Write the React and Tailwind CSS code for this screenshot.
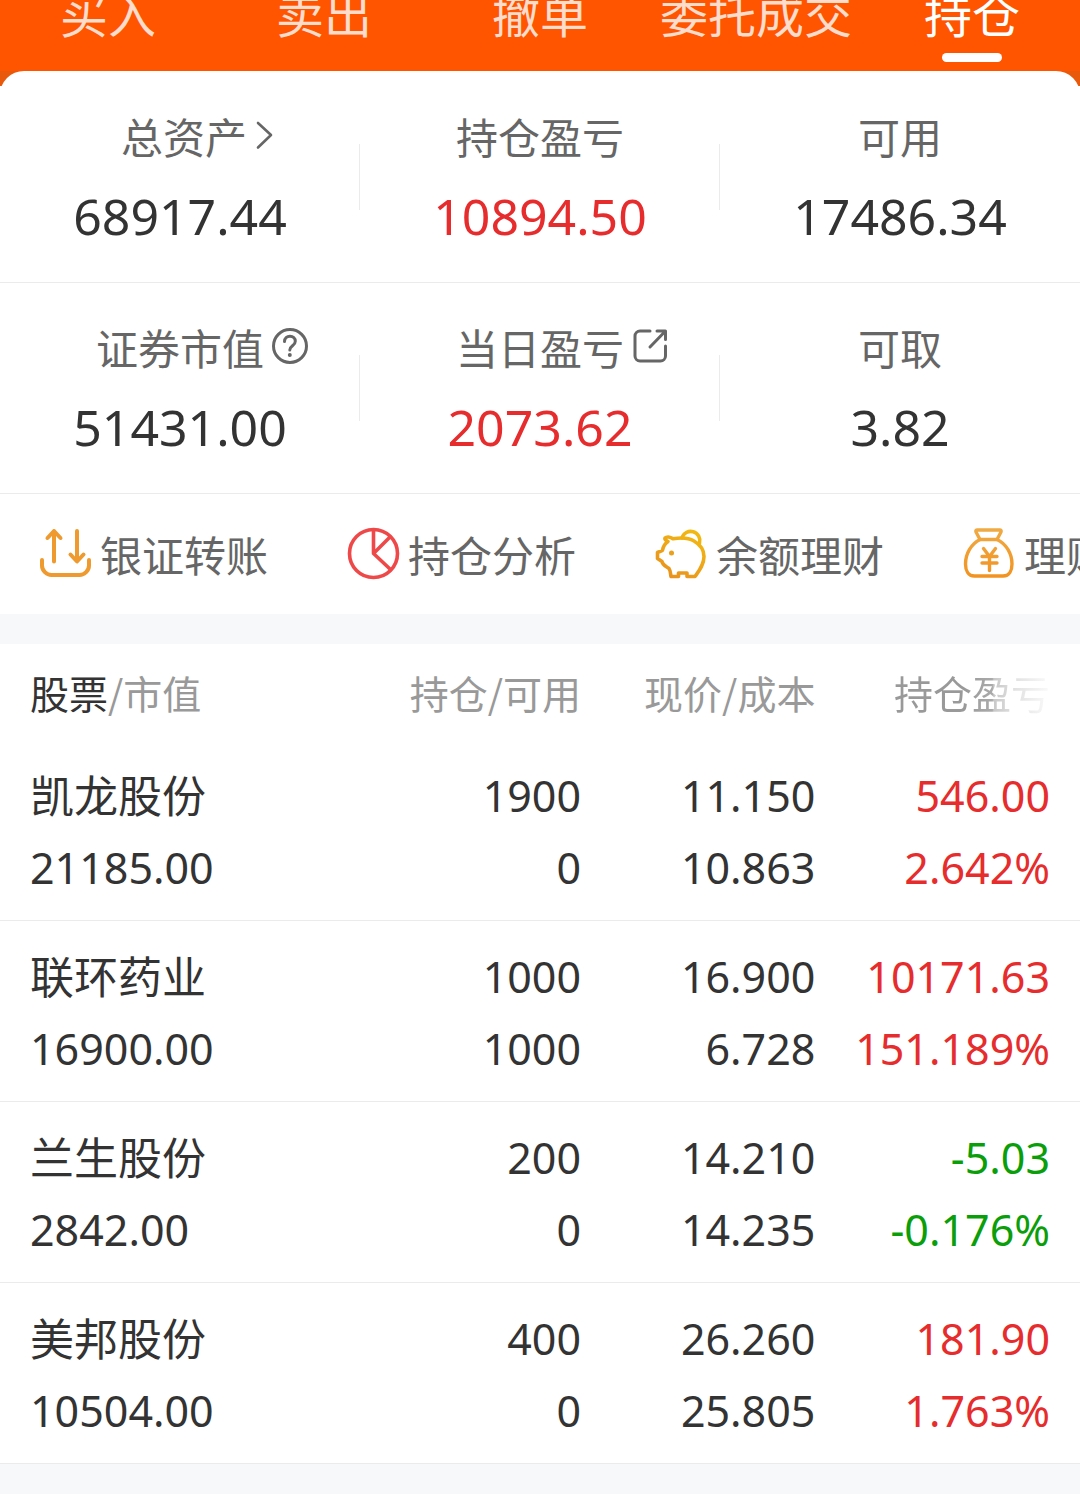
import React from "react";

const tabs = ["买入", "卖出", "撤单", "委托成交", "持仓"];

const holdings = [
  { name: "凯龙股份", value: "21185.00", held: "1900", usable: "0", price: "11.150", cost: "10.863", profit: "546.00", rate: "2.642%" },
  { name: "联环药业", value: "16900.00", held: "1000", usable: "1000", price: "16.900", cost: "6.728", profit: "10171.63", rate: "151.189%" },
  { name: "兰生股份", value: "2842.00", held: "200", usable: "0", price: "14.210", cost: "14.235", profit: "-5.03", rate: "-0.176%" },
  { name: "美邦股份", value: "10504.00", held: "400", usable: "0", price: "26.260", cost: "25.805", profit: "181.90", rate: "1.763%" },
];

function ChevronIcon() {
  return (
    <svg width="18" height="30" viewBox="0 0 18 30" fill="none" stroke="#666" strokeWidth="2.6" strokeLinecap="round" strokeLinejoin="round">
      <path d="M3 3l13 12L3 27.500" />
    </svg>
  );
}

function HelpIcon() {
  return (
    <svg width="36" height="36" viewBox="0 0 36 36" fill="none" stroke="#666" strokeWidth="3" strokeLinecap="round">
      <circle cx="18" cy="18" r="16.500" />
      <path d="M12.500 13.500c0-3.300 2.500-5.300 5.500-5.300s5.300 2 5.300 5c0 2-1.100 3.300-2.800 4.600-1.800 1.400-2.700 2.300-2.700 4.200" />
      <circle cx="17.800" cy="27" r="2" fill="#666" stroke="none" />
    </svg>
  );
}

function ShareIcon() {
  return (
    <svg width="36" height="34" viewBox="0 0 36 34" fill="none" stroke="#666" strokeWidth="3" strokeLinecap="round" strokeLinejoin="round">
      <path d="M18 2H8a5 5 0 0 0-5 5v20a5 5 0 0 0 5 5h20.500a5 5 0 0 0 5-5V17" />
      <path d="M25 2h8.500v8.500M33 2.500L18 18" />
    </svg>
  );
}

function TransferIcon() {
  return (
    <svg width="54" height="54" viewBox="0 0 54 54" fill="none" stroke="#ee9a2e" strokeWidth="4" strokeLinecap="round" strokeLinejoin="round">
      <path d="M16 34.500V4M9.500 11l6.500-7 6.500 7" />
      <path d="M39 4v30M32.500 27.500l6.500 7 6.500-7" />
      <path d="M4 33v5.500c0 5 4.500 9.500 9.500 9.500h28c5 0 9.500-4.500 9.500-9.500V33" />
    </svg>
  );
}

function PieIcon() {
  return (
    <svg width="54" height="54" viewBox="0 0 54 54" fill="none" stroke="#ee4848" strokeWidth="3.600" strokeLinejoin="round">
      <circle cx="27.500" cy="26.500" r="24" />
      <path d="M27.500 2.500v24L44 42M27.500 26.500L44 10" />
    </svg>
  );
}

function PiggyIcon() {
  return (
    <svg width="54" height="54" viewBox="0 0 54 54" fill="none" stroke="url(#piggy)" strokeWidth="3.600" strokeLinejoin="round" strokeLinecap="round">
      <defs>
        <linearGradient id="piggy" gradientUnits="userSpaceOnUse" x1="44" y1="0" x2="12" y2="52">
          <stop offset="0" stopColor="#f3bd10" />
          <stop offset="1" stopColor="#e8901f" />
        </linearGradient>
      </defs>
      <path d="M28 11a9 9 0 1 1 17.500 5" />
      <path d="M14 14.500c-2-1-3.500-2.500-3-3.500 1.500-1.500 5-1.500 8 .8C26 10.500 35 11 40 14c6 3.500 10 9 10 15.500C50 38 45 44 41 49.500h-8V46h-8.500v3.500h-7.500c-.5-3-.5-6-2-8-2.500-2-6.500-3-7-7l-4.500-3v-6l5-2.200C9 20 10.500 17 14 14.500z" />
      <circle cx="17.500" cy="26" r="2.500" fill="#e9a01c" stroke="none" />
    </svg>
  );
}

function MoneyBagIcon() {
  return (
    <svg width="54" height="54" viewBox="0 0 54 54" fill="none" stroke="url(#bag)" strokeWidth="3.400" strokeLinejoin="round" strokeLinecap="round">
      <defs>
        <linearGradient id="bag" gradientUnits="userSpaceOnUse" x1="27" y1="0" x2="27" y2="52">
          <stop offset="0" stopColor="#efab45" />
          <stop offset="1" stopColor="#f2921f" />
        </linearGradient>
      </defs>
      <path d="M18 12.500l-4-7.500c-.5-1.300 0-2 1.300-2h22.400c1.300 0 1.800.7 1.300 2l-4 7.500z" />
      <path d="M18 12.500C9 17 3.500 27 3.500 37c0 6 2.500 12 9 12h28.500c6.500 0 9-6 9-12 0-10-5.500-20-15-24.500" />
      <path d="M21.500 21.500l6 8 6-8M27.500 29.500v14M20 29.500h15M20 36h15" />
    </svg>
  );
}

const summary = [
  [
    { label: "总资产", value: "68917.44", icon: <ChevronIcon />, shifted: true },
    { label: "持仓盈亏", value: "10894.50", red: true },
    { label: "可用", value: "17486.34" },
  ],
  [
    { label: "证券市值", value: "51431.00", icon: <HelpIcon /> },
    { label: "当日盈亏", value: "2073.62", red: true, icon: <ShareIcon /> },
    { label: "可取", value: "3.82" },
  ],
];

const actions = [
  { label: "银证转账", icon: <TransferIcon /> },
  { label: "持仓分析", icon: <PieIcon /> },
  { label: "余额理财", icon: <PiggyIcon /> },
  { label: "理财", icon: <MoneyBagIcon /> },
];

function SummaryCell({ item, divided }) {
  const labelClass = `relative text-[42px] leading-[60px] text-[#666] ${item.shifted ? "pl-2" : ""}`;
  return (
    <div className="relative flex flex-1 flex-col items-center gap-[18px] pt-[34px] pb-[34px]">
      {item.icon ? (
        <button type="button" className={labelClass}>
          {item.label}
          <span className="absolute left-full top-0 ml-2 flex h-full items-center pb-0.5">{item.icon}</span>
        </button>
      ) : (
        <span className={labelClass}>{item.label}</span>
      )}
      <span className={`font-['Noto_Sans',sans-serif] text-[50px] leading-[64px] ${item.red ? "text-[#e62c2c]" : "text-[#333]"}`}>
        {item.value}
      </span>
      {divided && <span className="absolute right-0 top-[72px] h-[66px] w-px bg-[#ebebeb]" />}
    </div>
  );
}

function Pair({ top, bottom }) {
  return (
    <>
      <div>{top}</div>
      <div>{bottom}</div>
    </>
  );
}

export default function App() {
  return (
    <div className="min-h-screen w-full overflow-hidden bg-white font-['Noto_Sans_CJK_SC',sans-serif] text-[#333]">
      <header className="overflow-hidden bg-[#ff5500]">
        <nav className="-mt-6 flex pb-[9px]">
          {tabs.map((tab) => {
            const active = tab === "持仓";
            return (
              <button
                key={tab}
                type="button"
                className={`flex flex-1 flex-col items-center gap-[5px] whitespace-nowrap text-[48px] leading-[72px] ${active ? "text-white" : "text-[#ffdccc]"}`}
              >
                {tab}
                <span className={`h-[9px] w-[60px] rounded-full ${active ? "bg-white" : ""}`} />
              </button>
            );
          })}
        </nav>
      </header>
      <div className="h-[15px] bg-[#e9590c]" />

      <main className="relative -mt-[15px] rounded-t-[24px] bg-white pt-px">
        {summary.map((row, i) => (
          <section key={i} className="flex border-b border-[#ebebeb]">
            {row.map((item, j) => (
              <SummaryCell key={item.label} item={item} divided={j < 2} />
            ))}
          </section>
        ))}

        <div className="flex h-[120px] items-center gap-[78px] overflow-hidden pl-[38px]">
          {actions.map((a) => (
            <button key={a.label} type="button" className="flex shrink-0 items-center gap-2 text-[42px] leading-[60px] text-[#666]">
              {a.icon}
              {a.label}
            </button>
          ))}
        </div>

        <div className="h-[30px] bg-[#f7f8fa]" />

        <table className="w-full table-fixed border-collapse">
          <colgroup>
            <col />
            <col className="w-[20%]" />
            <col className="w-[21.7%]" />
            <col className="w-[24.5%]" />
          </colgroup>
          <thead>
            <tr className="h-24 whitespace-nowrap text-[39px] leading-[60px] text-[#999]">
              <th className="p-0 pl-[30px] text-left font-normal">
                <span className="text-[#333]">股票</span>/市值
              </th>
              <th className="p-0 text-right font-normal">持仓/可用</th>
              <th className="p-0 text-right font-normal">现价/成本</th>
              <th className="p-0 pr-[30px] text-right font-normal">
                <span className="bg-[linear-gradient(to_right,#999_45%,#aaa_63%,#c8c8c8_64%,#e2e2e2_78%,#fafafa_100%)] bg-clip-text text-transparent">
                  持仓盈亏
                </span>
              </th>
            </tr>
          </thead>
          <tbody className="font-['Noto_Sans','Noto_Sans_CJK_SC',sans-serif]">
            {holdings.map((h) => (
              <tr key={h.name} className="border-b border-[#ebebeb] text-right text-[43px] leading-[72px]">
                <td className="pt-5 pb-4 pl-[30px] text-left">
                  <Pair top={<span className="block text-[44px] leading-[72px]">{h.name}</span>} bottom={h.value} />
                </td>
                <td className="pt-5 pb-4">
                  <Pair top={h.held} bottom={h.usable} />
                </td>
                <td className="pt-5 pb-4">
                  <Pair top={h.price} bottom={h.cost} />
                </td>
                <td className={`pt-5 pb-4 pr-[30px] ${h.profit.startsWith("-") ? "text-[#0a9e0a]" : "text-[#e62c2c]"}`}>
                  <Pair top={h.profit} bottom={h.rate} />
                </td>
              </tr>
            ))}
          </tbody>
        </table>

        <div className="h-[30px] bg-[#f7f8fa]" />
      </main>
    </div>
  );
}
